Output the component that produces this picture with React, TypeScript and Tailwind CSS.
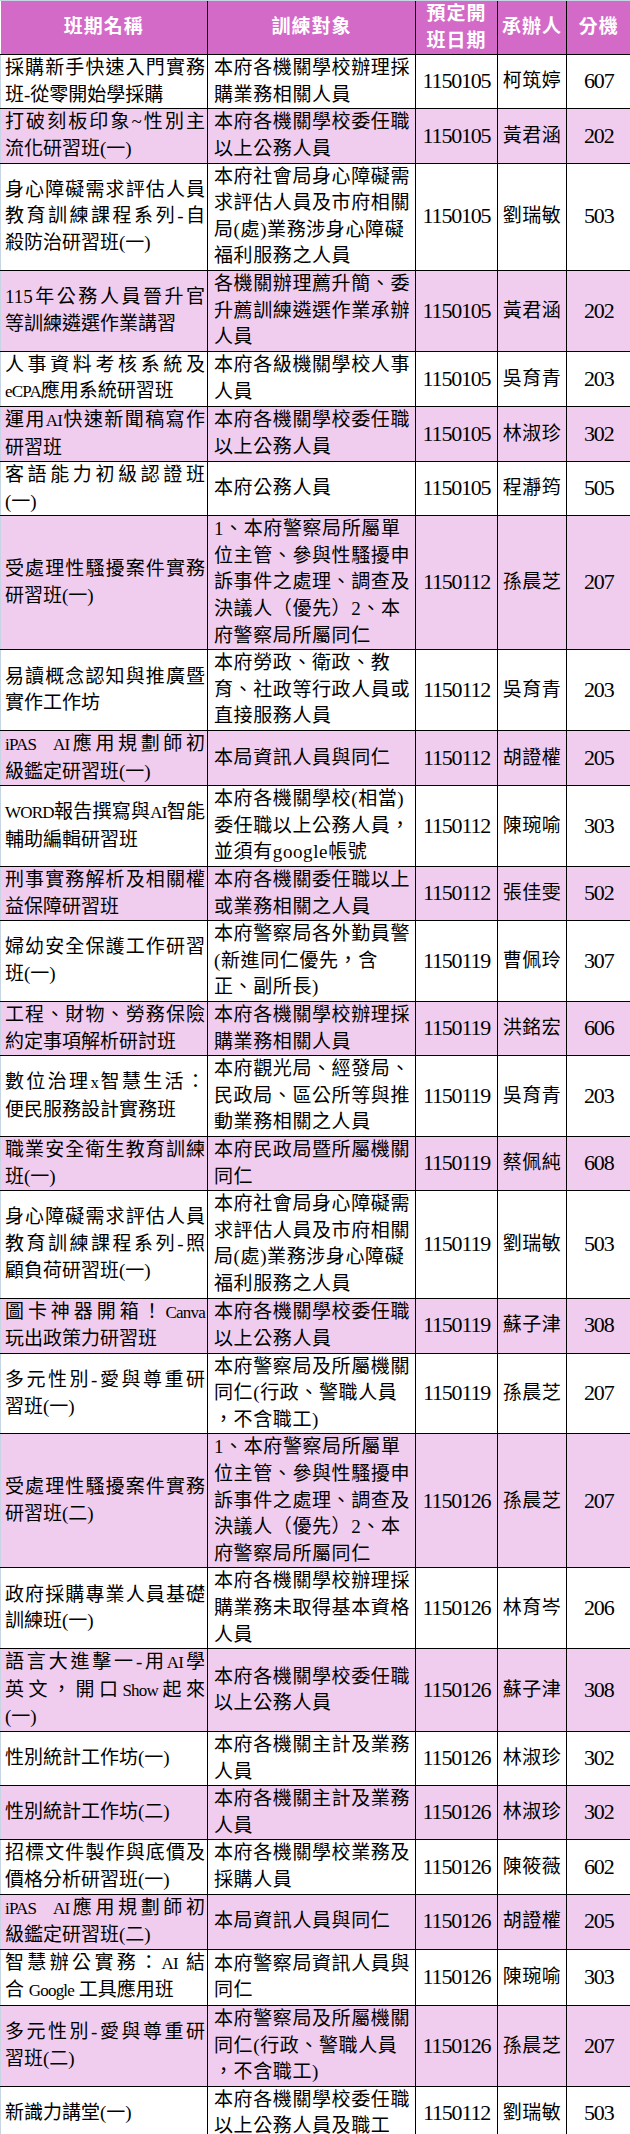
import React from "react";

type Row = { n: string[]; t: string[]; d: string; p: string; e: string };

const careNeeds = ["本府社會局身心障礙需", "求評估人員及市府相關", "局(處)業務涉身心障礙", "福利服務之人員"];
const harassment = ["1、本府警察局所屬單", "位主管、參與性騷擾申", "訴事件之處理、調查及", "決議人（優先）2、本", "府警察局所屬同仁"];
const police = ["本府警察局及所屬機關", "同仁(行政、警職人員", "，不含職工)"];
const civil = ["本府各機關學校委任職", "以上公務人員"];

const rows: Row[] = [
  { n: ["採購新手快速入門實務", "班-從零開始學採購"], t: ["本府各機關學校辦理採", "購業務相關人員"], d: "1150105", p: "柯筑婷", e: "607" },
  { n: ["打破刻板印象~性別主", "流化研習班(一)"], t: civil, d: "1150105", p: "黃君涵", e: "202" },
  { n: ["身心障礙需求評估人員", "教育訓練課程系列-自", "殺防治研習班(一)"], t: careNeeds, d: "1150105", p: "劉瑞敏", e: "503" },
  { n: ["115年公務人員晉升官", "等訓練遴選作業講習"], t: ["各機關辦理薦升簡、委", "升薦訓練遴選作業承辦", "人員"], d: "1150105", p: "黃君涵", e: "202" },
  { n: ["人事資料考核系統及", "eCPA應用系統研習班"], t: ["本府各級機關學校人事", "人員"], d: "1150105", p: "吳育青", e: "203" },
  { n: ["運用AI快速新聞稿寫作", "研習班"], t: civil, d: "1150105", p: "林淑珍", e: "302" },
  { n: ["客語能力初級認證班", "(一)"], t: ["本府公務人員"], d: "1150105", p: "程瀞筠", e: "505" },
  { n: ["受處理性騷擾案件實務", "研習班(一)"], t: harassment, d: "1150112", p: "孫晨芝", e: "207" },
  { n: ["易讀概念認知與推廣暨", "實作工作坊"], t: ["本府勞政、衛政、教", "育、社政等行政人員或", "直接服務人員"], d: "1150112", p: "吳育青", e: "203" },
  { n: ["iPAS\u00a0\u00a0AI應用規劃師初", "級鑑定研習班(一)"], t: ["本局資訊人員與同仁"], d: "1150112", p: "胡證權", e: "205" },
  { n: ["WORD報告撰寫與AI智能", "輔助編輯研習班"], t: ["本府各機關學校(相當)", "委任職以上公務人員，", "並須有google帳號"], d: "1150112", p: "陳琬喻", e: "303" },
  { n: ["刑事實務解析及相關權", "益保障研習班"], t: ["本府各機關委任職以上", "或業務相關之人員"], d: "1150112", p: "張佳雯", e: "502" },
  { n: ["婦幼安全保護工作研習", "班(一)"], t: ["本府警察局各外勤員警", "(新進同仁優先，含", "正、副所長)"], d: "1150119", p: "曹佩玲", e: "307" },
  { n: ["工程、財物、勞務保險", "約定事項解析研討班"], t: ["本府各機關學校辦理採", "購業務相關人員"], d: "1150119", p: "洪銘宏", e: "606" },
  { n: ["數位治理x智慧生活：", "便民服務設計實務班"], t: ["本府觀光局、經發局、", "民政局、區公所等與推", "動業務相關之人員"], d: "1150119", p: "吳育青", e: "203" },
  { n: ["職業安全衛生教育訓練", "班(一)"], t: ["本府民政局暨所屬機關", "同仁"], d: "1150119", p: "蔡佩純", e: "608" },
  { n: ["身心障礙需求評估人員", "教育訓練課程系列-照", "顧負荷研習班(一)"], t: careNeeds, d: "1150119", p: "劉瑞敏", e: "503" },
  { n: ["圖卡神器開箱！Canva", "玩出政策力研習班"], t: civil, d: "1150119", p: "蘇子津", e: "308" },
  { n: ["多元性別-愛與尊重研", "習班(一)"], t: police, d: "1150119", p: "孫晨芝", e: "207" },
  { n: ["受處理性騷擾案件實務", "研習班(二)"], t: harassment, d: "1150126", p: "孫晨芝", e: "207" },
  { n: ["政府採購專業人員基礎", "訓練班(一)"], t: ["本府各機關學校辦理採", "購業務未取得基本資格", "人員"], d: "1150126", p: "林育岑", e: "206" },
  { n: ["語言大進擊一-用AI學", "英文，開口Show起來", "(一)"], t: civil, d: "1150126", p: "蘇子津", e: "308" },
  { n: ["性別統計工作坊(一)"], t: ["本府各機關主計及業務", "人員"], d: "1150126", p: "林淑珍", e: "302" },
  { n: ["性別統計工作坊(二)"], t: ["本府各機關主計及業務", "人員"], d: "1150126", p: "林淑珍", e: "302" },
  { n: ["招標文件製作與底價及", "價格分析研習班(一)"], t: ["本府各機關學校業務及", "採購人員"], d: "1150126", p: "陳筱薇", e: "602" },
  { n: ["iPAS\u00a0\u00a0AI應用規劃師初", "級鑑定研習班(二)"], t: ["本局資訊人員與同仁"], d: "1150126", p: "胡證權", e: "205" },
  { n: ["智慧辦公實務：AI 結", "合 Google 工具應用班"], t: ["本府警察局資訊人員與", "同仁"], d: "1150126", p: "陳琬喻", e: "303" },
  { n: ["多元性別-愛與尊重研", "習班(二)"], t: police, d: "1150126", p: "孫晨芝", e: "207" },
  { n: ["新識力講堂(一)"], t: ["本府各機關學校委任職", "以上公務人員及職工"], d: "1150112", p: "劉瑞敏", e: "503" },
];

// Latin words are set a little tighter so the long names keep their line breaks
const renderLine = (line: string, latin: string) =>
  line.split(/([A-Za-z]+)/).map((part, i) =>
    i % 2 === 1 ? (
      <span key={i} className={latin}>
        {part}
      </span>
    ) : (
      part
    )
  );

const cell = "border border-black align-middle leading-[26.6px]";

export default function App() {
  return (
    <div className="w-[630px] bg-white border-t border-[#c6d5e4] font-['Liberation_Serif','Noto_Sans_CJK_TC',serif] text-black">
      <table className="w-[630px] table-fixed border-collapse">
        <colgroup>
          <col className="w-[207px]" />
          <col className="w-[208px]" />
          <col className="w-[82px]" />
          <col className="w-[69px]" />
          <col className="w-[64px]" />
        </colgroup>
        <thead>
          <tr className="bg-[#d46ac8] text-white font-bold text-[19px] tracking-[1px]">
            <th className={`${cell} border-t-0 border-l-0 text-center`}>班期名稱</th>
            <th className={`${cell} border-t-0 text-center`}>訓練對象</th>
            <th className={`${cell} border-t-0 text-center`}>
              預定開
              <br />
              班日期
            </th>
            <th className={`${cell} border-t-0 text-center`}>承辦人</th>
            <th className={`${cell} border-t-0 border-r-0 text-center`}>分機</th>
          </tr>
        </thead>
        <tbody>
          {rows.map((r, idx) => (
            <tr key={idx} className={idx % 2 === 1 ? "bg-[#f0cdee]" : "bg-white"}>
              <td className={`${cell} border-l-[#c6d5e4] pl-[4px] pr-[2px] text-[19px]`}>
                {r.n.map((l, i) => (
                  <div
                    key={i}
                    className={i < r.n.length - 1 ? "text-justify [text-align-last:justify]" : "text-left"}
                  >
                    {renderLine(l, "text-[17px] tracking-[-0.8px]")}
                  </div>
                ))}
              </td>
              <td className={`${cell} pl-[6px] pr-[1px] text-[19px] tracking-[0.6px]`}>
                {r.t.map((l, i) => (
                  <div key={i} className="text-left">
                    {renderLine(l, "text-[19px]")}
                  </div>
                ))}
              </td>
              <td className={`${cell} text-center text-[22px] tracking-[-1.2px]`}>{r.d}</td>
              <td className={`${cell} text-center text-[19px] tracking-[0.5px]`}>{r.p}</td>
              <td className={`${cell} border-r-0 text-center text-[22px] tracking-[-1.2px]`}>{r.e}</td>
            </tr>
          ))}
        </tbody>
      </table>
    </div>
  );
}
